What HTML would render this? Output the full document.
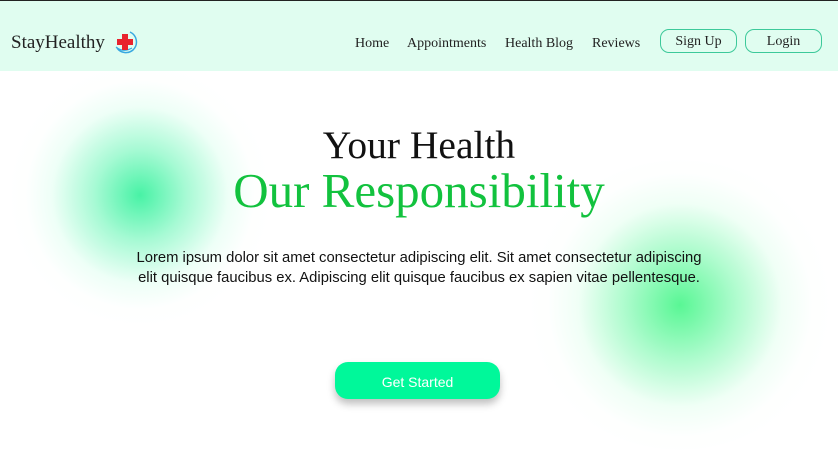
<!DOCTYPE html>
<html><head><meta charset="utf-8"><style>
*{margin:0;padding:0;box-sizing:border-box}
body{width:838px;height:431px;overflow:hidden;background:#fff;position:relative;font-family:"Liberation Serif",serif}
.top{position:absolute;left:0;top:0;width:838px;height:1px;background:#222}
nav{position:absolute;top:1px;left:0;width:838px;height:70px;background:#e0fdf0;z-index:2}
.logo{position:absolute;left:11px;top:31px;font-size:19px;color:#222}
.logo svg{position:absolute;left:102px;top:-3px}
.links a{position:absolute;top:35px;font-size:14px;color:#222;text-decoration:none}
.btn{position:absolute;top:28px;width:77px;height:24px;border:1.5px solid #3cc99a;border-radius:9px;font-size:14px;text-align:center;line-height:24px;color:#222}
.blob{position:absolute;border-radius:50%}
h1{position:absolute;top:122px;left:0;width:838px;text-align:center;font-weight:normal;font-size:39.5px;color:#111}
h2{position:absolute;top:162px;left:0;width:838px;text-align:center;font-weight:normal;font-size:49px;color:#12c23e}
p{position:absolute;top:248px;left:0;width:838px;text-align:center;font-family:"Liberation Sans",sans-serif;font-size:14.8px;line-height:20px;color:#111}
.gs{position:absolute;left:335px;top:362px;width:165px;height:37px;background:#00f89a;border-radius:13px;color:#fff;font-family:"Liberation Sans",sans-serif;font-size:14px;text-align:center;line-height:40px;box-shadow:0 5px 8px rgba(0,0,0,.25)}
</style></head><body>
<div class="blob" style="left:10px;top:65px;width:260px;height:260px;background:radial-gradient(circle,rgba(40,240,150,.85) 0%,rgba(80,245,170,.5) 25%,rgba(170,255,215,.2) 48%,rgba(230,255,242,.06) 62%,rgba(255,255,255,0) 72%)"></div>
<div class="blob" style="left:525px;top:160px;width:310px;height:290px;background:radial-gradient(circle,rgba(60,245,130,.85) 0%,rgba(100,248,160,.55) 25%,rgba(180,255,210,.2) 48%,rgba(230,255,240,.06) 62%,rgba(255,255,255,0) 72%)"></div>
<div class="top"></div>
<nav>
<div class="logo">StayHealthy
<svg width="26" height="26" viewBox="0 0 26 26"><path d="M17 3 A11 11 0 0 1 20 21 A11 11 0 0 1 4 19" fill="none" stroke="#38a8e0" stroke-width="1.5"/><path d="M3 18 Q10 24 19 19" fill="none" stroke="#38a8e0" stroke-width="1.2"/><path d="M9 5h6v5h5v6h-5v5H9v-5H4v-6h5z" fill="#e8232e"/></svg></div>
<div class="links">
<a style="left:355px">Home</a><a style="left:407px">Appointments</a><a style="left:505px">Health Blog</a><a style="left:592px">Reviews</a>
</div>
<div class="btn" style="left:660px">Sign Up</div>
<div class="btn" style="left:745px">Login</div>
</nav>
<h1>Your Health</h1>
<h2>Our Responsibility</h2>
<p>Lorem ipsum dolor sit amet consectetur adipiscing elit. Sit amet consectetur adipiscing<br>elit quisque faucibus ex. Adipiscing elit quisque faucibus ex sapien vitae pellentesque.</p>
<div class="gs">Get Started</div>
</body></html>
